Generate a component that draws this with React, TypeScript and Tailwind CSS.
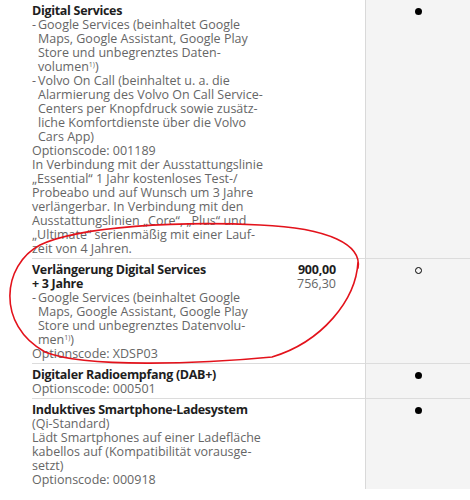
import React from "react";

type Row = {
  title: React.ReactNode;
  body: React.ReactNode;
  price?: { list: string; net: string };
  mark: "full" | "open";
  last?: boolean;
};

const Fn = () => <span className="relative -top-[4px] text-[7px] leading-none">1)</span>;

const Bullet = ({ children }: { children: React.ReactNode }) => (
  <div className="flex">
    <span className="w-[6px] shrink-0">-</span>
    <span>{children}</span>
  </div>
);

const rows: Row[] = [
  {
    title: "Digital Services",
    mark: "full",
    body: (
      <>
        <Bullet>
          Google Services (beinhaltet Google
          <br />
          Maps, Google Assistant, Google Play
          <br />
          Store und unbegrenztes Daten-
          <br />
          volumen
          <Fn />)
        </Bullet>
        <Bullet>
          Volvo On Call (beinhaltet u. a. die
          <br />
          Alarmierung des Volvo On Call Service-
          <br />
          Centers per Knopfdruck sowie zusätz-
          <br />
          liche Komfortdienste über die Volvo
          <br />
          Cars App)
        </Bullet>
        <div>Optionscode: 001189</div>
        <div>
          In Verbindung mit der Ausstattungslinie
          <br />
          „Essential“ 1 Jahr kostenloses Test-/
          <br />
          Probeabo und auf Wunsch um 3 Jahre
          <br />
          verlängerbar. In Verbindung mit den
          <br />
          Ausstattungslinien „Core“, „Plus“ und
          <br />
          „Ultimate“ serienmäßig mit einer Lauf-
          <br />
          zeit von 4 Jahren.
        </div>
      </>
    ),
  },
  {
    title: (
      <>
        Verlängerung Digital Services
        <br />+ 3 Jahre
      </>
    ),
    price: { list: "900,00", net: "756,30" },
    mark: "open",
    body: (
      <>
        <Bullet>
          Google Services (beinhaltet Google
          <br />
          Maps, Google Assistant, Google Play
          <br />
          Store und unbegrenztes Datenvolu-
          <br />
          men
          <Fn />)
        </Bullet>
        <div>Optionscode: XDSP03</div>
      </>
    ),
  },
  {
    title: "Digitaler Radioempfang (DAB+)",
    mark: "full",
    body: <div>Optionscode: 000501</div>,
  },
  {
    title: "Induktives Smartphone-Ladesystem",
    mark: "full",
    last: true,
    body: (
      <>
        <div>(Qi-Standard)</div>
        <div>
          Lädt Smartphones auf einer Ladefläche
          <br />
          kabellos auf (Kompatibilität vorausge-
          <br />
          setzt)
        </div>
        <div>Optionscode: 000918</div>
      </>
    ),
  },
];

export default function App() {
  return (
    <div
      className="relative w-[470px] h-[500px] overflow-hidden bg-white text-[12.5px] leading-[14px] text-[#666]"
      style={{ fontFamily: "'Open Sans', 'Noto Sans', sans-serif" }}
    >
      {rows.map((r, i) => (
        <div key={i} className="flex">
          <div className="w-[366px] shrink-0 border-r border-[#d9d9d9] pl-[32px]">
            <div className={`flex pt-[4px] pb-[2px] ${r.last ? "" : "border-b border-[#dcdcdc]"}`}>
              <div className="w-[226px] shrink-0 whitespace-nowrap">
                <div className="font-bold tracking-[-0.3px] text-[#1e1e1e]">{r.title}</div>
                {r.body}
              </div>
              {r.price && (
                <div className="flex-1 pr-[29px] text-right">
                  <div className="font-bold tracking-[-0.2px] text-[#1e1e1e]">{r.price.list}</div>
                  <div>{r.price.net}</div>
                </div>
              )}
            </div>
          </div>
          <div className={`flex-1 bg-[#f4f4f4] pt-[4px] ${r.last ? "" : "border-b border-[#dcdcdc]"}`}>
            <div className="flex h-[14px] items-center justify-center">
              {r.mark === "full" ? (
                <span className="h-[7px] w-[7px] rounded-full bg-black" />
              ) : (
                <span className="h-[7px] w-[7px] rounded-full border-[1.5px] border-black" />
              )}
            </div>
          </div>
        </div>
      ))}

      <svg className="pointer-events-none absolute left-0 top-0" width="470" height="500">
        <path
          d="M 358 268 C 362 245, 330 228, 260 225 C 180 221, 80 226, 40 245 C 2 265, -4 325, 45 352 C 85 368, 200 364, 272 357 C 322 342, 356 300, 358 262"
          fill="none"
          stroke="#e3121b"
          strokeWidth="1.6"
          strokeLinecap="round"
        />
      </svg>
    </div>
  );
}
